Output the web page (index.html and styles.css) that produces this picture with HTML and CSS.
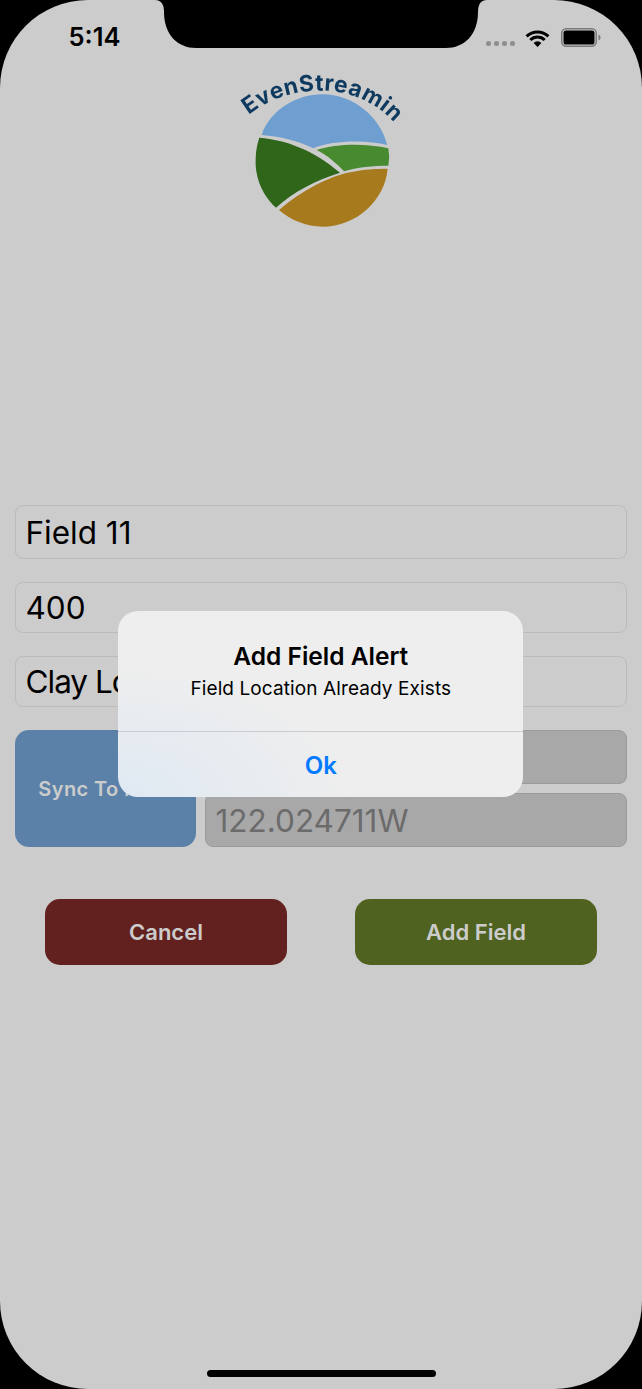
FILE: index.html
```html
<!DOCTYPE html>
<html lang="en">
<head>
<meta charset="utf-8">
<title>Add Field</title>
<link rel="stylesheet" href="styles.css">
</head>
<body>
<div class="screen">
  <svg class="notch" viewBox="0 0 642 48" width="642" height="48"><path d="M155,0 Q164,0 164,12 C164,35 178,48 196,48 L446,48 C464,48 478,35 478,12 Q478,0 487,0 Z"/></svg>
  <header class="status">
    <span class="time">5:14</span>
    <div class="status-icons">
      <span class="dots"><i></i><i></i><i></i><i></i></span>
      <svg class="wifi" viewBox="0 0 25 18" width="25" height="18"><path d="M12.5 18 8.6 13.9a5.4 5.4 0 0 1 7.8 0Z"/><path d="M1.6 7.4a15.4 15.4 0 0 1 21.8 0" class="arc"/><path d="M5.3 11a10.2 10.2 0 0 1 14.4 0" class="arc"/></svg>
      <svg class="battery" viewBox="0 0 40 19" width="40" height="19"><rect x=".75" y=".75" width="34.5" height="17.5" rx="4.5" class="shell"/><rect x="2.5" y="2.5" width="31" height="14" rx="2.6"/><path d="M37.5 6.5c1.2.4 2 1.6 2 3s-.8 2.6-2 3Z" class="cap"/></svg>
    </div>
  </header>
  <svg class="logo" viewBox="0 0 600 540" width="200" height="180" role="img" aria-label="EvenStreamin logo">
    <defs><path id="arc" d="M60,188 C130,118 225,90 310,92 C395,94 485,132 545,215"/></defs>
    <text class="logo-text"><textPath href="#arc" startOffset="50%" text-anchor="middle">EvenStreamin</textPath></text>
    <path fill="#6f9fd0" d="M125,225 C150,150 230,103 307,103 C400,103 480,170 502,255 C440,240 340,240 280,265 C230,240 180,230 125,225Z"/>
    <path fill="#478a2f" d="M290,270 C350,250 440,250 505,265 Q510,290 505,317 C460,317 410,322 372,334 C350,310 320,285 290,270Z"/>
    <path fill="#30661a" d="M118,233 C200,240 280,270 360,338 C290,360 220,395 168,443 C120,400 105,340 107,300 C107,275 112,250 118,233Z"/>
    <path fill="#a87a1e" d="M177,450 C240,395 330,345 400,335 C430,328 470,326 503,326 C495,420 410,500 307,500 C260,500 210,480 177,450Z"/>
  </svg>
  <main class="form">
    <input class="field field-name" type="text" value="Field 11">
    <input class="field" type="text" value="400">
    <input class="field field-soil" type="text" value="Clay Loam">
    <div class="location">
      <button class="sync" type="button">Sync To Field</button>
      <div class="coords">
        <input class="field coord" type="text" value="37.331705N" disabled>
        <input class="field coord" type="text" value="122.024711W" disabled>
      </div>
    </div>
    <div class="actions">
      <button class="action cancel" type="button">Cancel</button>
      <button class="action add" type="button">Add Field</button>
    </div>
  </main>
  <div class="home-bar"></div>
  <div class="alert" role="alertdialog">
    <div class="alert-body">
      <h2 class="alert-title">Add Field Alert</h2>
      <p class="alert-msg">Field Location Already Exists</p>
    </div>
    <button class="alert-ok" type="button">Ok</button>
  </div>
</div>
</body>
</html>
```

FILE: styles.css
```css
* { box-sizing: border-box; }
html, body { margin: 0; padding: 0; background: #000; }
body { width: 642px; height: 1389px; overflow: hidden; font-family: Inter, "Liberation Sans", sans-serif; }
.screen { position: relative; width: 642px; height: 1389px; background: #ccc; border-radius: 88px; overflow: hidden; display: flex; flex-direction: column; }
.notch { position: absolute; top: 0; left: 0; fill: #000; }
.status { height: 60px; display: flex; justify-content: space-between; padding: 21px 41px 0 68.5px; }
.time { font-size: 25.5px; line-height: 32px; font-weight: 600; color: #000; }
.status-icons { display: flex; align-items: flex-start; padding-top: 7px; }
.dots { display: flex; gap: 3px; margin: 13px 10px 0 0; }
.dots i { width: 5px; height: 5px; border-radius: 50%; background: #8e8e8e; }
.wifi { margin: 1px 11px 0 0; fill: #000; }
.wifi .arc { fill: none; stroke: #000; stroke-width: 3; }
.battery { fill: #000; }
.battery .shell { fill: none; stroke: #7a7a7a; stroke-width: 1.5; }
.battery .cap { fill: #7a7a7a; }
.logo { display: block; align-self: center; flex: none; margin-right: 2px; filter: blur(.4px); }
.logo-text { font-family: Inter, sans-serif; font-weight: 700; font-size: 68px; letter-spacing: 1.5px; fill: #0f3a5f; }
.form { margin-top: 265px; padding: 0 15px; display: flex; flex-direction: column; gap: 23px; }
.field { display: block; width: 100%; height: 51px; background: transparent; border: 1px solid #bbb; border-radius: 8px; padding: 0 9.5px; font: 400 31.5px Inter, sans-serif; color: #000; outline: none; }
.field-name { height: 54px; }
.field-soil { letter-spacing: -1px; }
.location { display: flex; gap: 9px; height: 117px; }
.sync { width: 181px; flex: none; border: 0; border-radius: 14px; background: #5b81a9; color: #ccc; font: 600 20px Inter, sans-serif; letter-spacing: .4px; padding: 0; }
.coords { flex: 1; display: flex; flex-direction: column; justify-content: space-between; }
.field.coord { height: 54px; background: #a8a8a8; border-color: #9b9b9b; color: #6b6b6b; -webkit-text-fill-color: #6b6b6b; opacity: 1; }
.actions { margin-top: 29px; padding: 0 30px; display: flex; justify-content: space-between; }
.action { width: 242px; height: 66px; border: 0; border-radius: 15px; color: #ccc; font: 600 22px Inter, sans-serif; padding: 0; }
.cancel { background: #62211e; }
.add { background: #4f6220; }
.home-bar { position: absolute; left: 207px; top: 1370px; width: 229px; height: 7px; border-radius: 4px; background: #000; }
.alert { position: absolute; left: 118.3px; top: 611px; width: 405px; height: 186px; border-radius: 20px; background: radial-gradient(ellipse 230px 130px at 0% 100%, #dfe9f3, rgba(223,233,243,0)), #eeeeee; display: flex; flex-direction: column; text-align: center; color: #000; }
.alert-body { height: 121px; padding-top: 30px; border-bottom: 1px solid #c8ccd2; }
.alert-title { margin: 0; font-size: 24.5px; line-height: 30px; font-weight: 600; }
.alert-msg { margin: 6px 0 0; font-size: 19px; line-height: 24px; font-weight: 400; letter-spacing: .1px; }
.alert-ok { flex: 1; border: 0; background: none; color: #007aff; font: 600 24px Inter, sans-serif; padding: 1px 0 0; }
```
